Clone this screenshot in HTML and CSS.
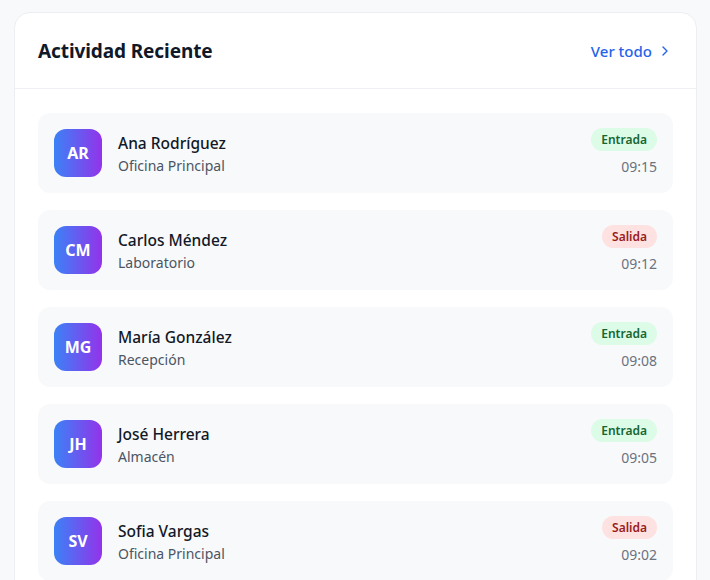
FILE: index.html
```html
<!DOCTYPE html>
<html lang="es">
<head>
<meta charset="utf-8">
<link rel="stylesheet" href="styles.css">
</head>
<body>
<div class="card">
  <div class="card-header">
    <h2 class="title">Actividad Reciente</h2>
    <a class="see-all" href="#">Ver todo
      <svg class="chev" width="16" height="16" viewBox="0 0 24 24" fill="none" stroke="currentColor" stroke-width="2" stroke-linecap="round" stroke-linejoin="round"><path d="M9 18l6-6-6-6"/></svg>
    </a>
  </div>
  <div class="list">
    <div class="row">
      <div class="avatar">AR</div>
      <div class="info"><div class="name">Ana Rodríguez</div><div class="place">Oficina Principal</div></div>
      <div class="meta"><span class="badge in">Entrada</span><span class="time">09:15</span></div>
    </div>
    <div class="row">
      <div class="avatar">CM</div>
      <div class="info"><div class="name">Carlos Méndez</div><div class="place">Laboratorio</div></div>
      <div class="meta"><span class="badge out">Salida</span><span class="time">09:12</span></div>
    </div>
    <div class="row">
      <div class="avatar">MG</div>
      <div class="info"><div class="name">María González</div><div class="place">Recepción</div></div>
      <div class="meta"><span class="badge in">Entrada</span><span class="time">09:08</span></div>
    </div>
    <div class="row">
      <div class="avatar">JH</div>
      <div class="info"><div class="name">José Herrera</div><div class="place">Almacén</div></div>
      <div class="meta"><span class="badge in">Entrada</span><span class="time">09:05</span></div>
    </div>
    <div class="row">
      <div class="avatar">SV</div>
      <div class="info"><div class="name">Sofia Vargas</div><div class="place">Oficina Principal</div></div>
      <div class="meta"><span class="badge out">Salida</span><span class="time">09:02</span></div>
    </div>
  </div>
</div>
</body>
</html>
```
FILE: styles.css
```css
* { box-sizing: border-box; }
html, body { margin: 0; padding: 0; }
body {
  background: #f8f9fb;
  font-family: "Noto Sans", "Open Sans", sans-serif;
  padding: 12px 13px 0 14px;
  height: 580px;
  overflow: hidden;
}
.card {
  background: #fff;
  border: 1px solid #eceef1;
  border-radius: 16px;
  width: 683px;
}
.card-header {
  height: 76px;
  display: flex;
  align-items: center;
  justify-content: space-between;
  padding: 0 23px 0 23px;
  border-bottom: 1px solid #eef0f3;
}
.title {
  margin: 0;
  font-size: 19px;
  font-weight: 700;
  color: #111827;
  letter-spacing: -0.1px;
}
.see-all {
  display: flex;
  align-items: center;
  gap: 5px;
  color: #2563eb;
  text-decoration: none;
  font-size: 15px;
  font-weight: 500;
}
.chev { width: 16px; height: 16px; }
.list {
  padding: 24px 23px;
  display: flex;
  flex-direction: column;
  gap: 17px;
}
.row {
  height: 80px;
  background: #f8f9fb;
  border-radius: 12px;
  display: flex;
  align-items: center;
  padding: 0 16px;
}
.avatar {
  width: 48px;
  height: 48px;
  border-radius: 12px;
  background: linear-gradient(90deg, #3b82f6, #9333ea);
  color: #fff;
  font-weight: 700;
  font-size: 16px;
  display: flex;
  align-items: center;
  justify-content: center;
  flex-shrink: 0;
}
.info { margin-left: 16px; flex: 1; }
.name {
  font-size: 15.5px;
  font-weight: 500;
  color: #111827;
  line-height: 24px;
}
.place {
  font-size: 14px;
  color: #4b5563;
  line-height: 20px;
  margin-top: 1px;
}
.meta {
  display: flex;
  flex-direction: column;
  align-items: flex-end;
  gap: 5px;
}
.badge {
  font-size: 12px;
  font-weight: 600;
  padding: 0 10px;
  height: 23px;
  line-height: 23px;
  border-radius: 999px;
}
.badge.in { background: #dcfce7; color: #166534; }
.badge.out { background: #fee2e2; color: #991b1b; }
.time {
  font-size: 14px;
  color: #6b7280;
  line-height: 22px;
}
```
